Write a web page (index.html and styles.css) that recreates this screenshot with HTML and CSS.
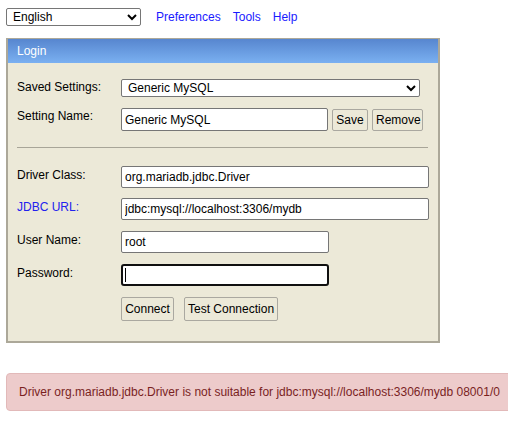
FILE: index.html
```html
<!DOCTYPE html>
<html>
<head>
<meta charset="utf-8">
<link rel="stylesheet" href="styles.css">
</head>
<body>
<div class="topbar">
  <select class="lang"><option>English</option></select>
  <a class="nav first" href="#">Preferences</a>
  <a class="nav" href="#">Tools</a>
  <a class="nav" href="#">Help</a>
</div>
<div class="login">
  <div class="login-head">Login</div>
  <div class="login-body">
    <div class="row r-saved">
      <label class="lbl">Saved Settings:</label>
      <select class="ctl sel-saved"><option>Generic MySQL</option></select>
    </div>
    <div class="row r-name">
      <label class="lbl">Setting Name:</label>
      <input class="ctl in-name" type="text" value="Generic MySQL">
      <button class="btn b-save">Save</button>
      <button class="btn b-remove">Remove</button>
    </div>
    <div class="rule"></div>
    <div class="row r-driver">
      <label class="lbl">Driver Class:</label>
      <input class="ctl in-wide" type="text" value="org.mariadb.jdbc.Driver">
    </div>
    <div class="row">
      <label class="lbl link">JDBC URL:</label>
      <input class="ctl in-wide" type="text" value="jdbc:mysql://localhost:3306/mydb">
    </div>
    <div class="row">
      <label class="lbl">User Name:</label>
      <input class="ctl in-short" type="text" value="root">
    </div>
    <div class="row">
      <label class="lbl">Password:</label>
      <span class="pw-wrap"><input class="ctl in-short focused" type="password" value=""></span>
    </div>
    <div class="row r-buttons">
      <span class="lbl"></span>
      <button class="btn b-connect">Connect</button>
      <button class="btn b-test">Test Connection</button>
    </div>
  </div>
</div>
<div class="error">Driver org.mariadb.jdbc.Driver is not suitable for jdbc:mysql://localhost:3306/mydb 08001/0</div>
</body>
</html>
```
FILE: styles.css
```css
html, body {
  overflow: hidden;
}
body {
  margin: 0;
  padding: 8px 0 0 6px;
  font-family: "Liberation Sans", Arial, sans-serif;
  font-size: 12px;
  color: #000;
  background: #fff;
}
.topbar {
  display: flex;
  align-items: center;
  height: 18px;
}
.lang {
  width: 135px;
  height: 18px;
  box-sizing: border-box;
  font-family: "Liberation Sans", Arial, sans-serif;
  font-size: 12px;
  border: 1px solid #767676;
  border-radius: 2px;
  padding: 0 0 0 2px;
  background: #fff;
  color: #000;
}
.nav {
  color: #1a1aff;
  text-decoration: none;
  font-size: 12px;
  margin-left: 12px;
}
.nav.first {
  margin-left: 15px;
}
.login {
  margin-top: 12px;
  width: 430px;
  border: 2px solid #aca899;
  border-top-width: 1px;
  background: #ece9d8;
}
.login-head {
  height: 24px;
  line-height: 24px;
  padding-left: 9px;
  color: #fff;
  font-size: 12px;
  background: linear-gradient(#5786cf, #7ab0f1);
}
.login-body {
  padding: 16px 0 20px 9px;
}
.row {
  display: flex;
  align-items: flex-start;
  margin-bottom: 11px;
}
.lbl {
  width: 104px;
  flex: none;
  padding-top: 2px;
  font-size: 12px;
}
.link {
  color: #2222ee;
}
.ctl {
  box-sizing: border-box;
  height: 22px;
  font-family: "Liberation Sans", Arial, sans-serif;
  font-size: 12px;
  color: #000;
  background: #fff;
  border: 1px solid #767676;
  border-radius: 2px;
  padding: 1px 3px;
  margin: 0;
}
.sel-saved {
  width: 299px;
  height: 18px;
  padding: 0 0 0 2px;
}
.r-saved {
  margin-bottom: 11px;
}
.r-saved .lbl {
  padding-top: 1px;
}
.in-name {
  width: 207px;
  height: 23px;
}
.in-wide {
  width: 308px;
}
.in-short {
  width: 208px;
}
.pw-wrap {
  position: relative;
  display: block;
  height: 22px;
}
.pw-wrap::after {
  content: "";
  position: absolute;
  left: 4px;
  top: 4px;
  width: 1px;
  height: 14px;
  background: #000;
}
.focused {
  display: block;
  border: 2px solid #101010;
  border-radius: 3px;
  outline: none;
}
.btn {
  box-sizing: border-box;
  height: 23px;
  font-family: "Liberation Sans", Arial, sans-serif;
  font-size: 12px;
  color: #000;
  background: #ece9d8;
  border: 1px solid #aaa8a0;
  border-radius: 2px;
  padding: 0 3px;
  margin: 0;
  white-space: nowrap;
}
.b-save {
  margin-left: 4px;
  width: 36px;
}
.b-remove {
  margin-left: 4px;
  width: 51px;
}
.r-name {
  margin-bottom: 16px;
}
.r-name .lbl {
  padding-top: 1px;
}
.r-name .btn {
  margin-top: 1px;
  height: 22px;
}
.rule {
  width: 411px;
  height: 0;
  border-top: 1px solid #a8a598;
  margin: 0 0 18px 0;
}
.r-driver {
  margin-bottom: 10px;
}
.r-buttons {
  margin-bottom: 0;
}
.r-buttons .btn {
  height: 24px;
}
.b-connect {
  width: 53px;
}
.b-test {
  margin-left: 10px;
  width: 94px;
}
.error {
  margin-top: 30px;
  width: 520px;
  box-sizing: border-box;
  height: 38px;
  line-height: 36px;
  padding-left: 12px;
  background: #edcbcb;
  border: 1px solid #e2b9b9;
  border-radius: 4px;
  color: #7a1f1f;
  font-size: 12px;
  white-space: nowrap;
}
```
